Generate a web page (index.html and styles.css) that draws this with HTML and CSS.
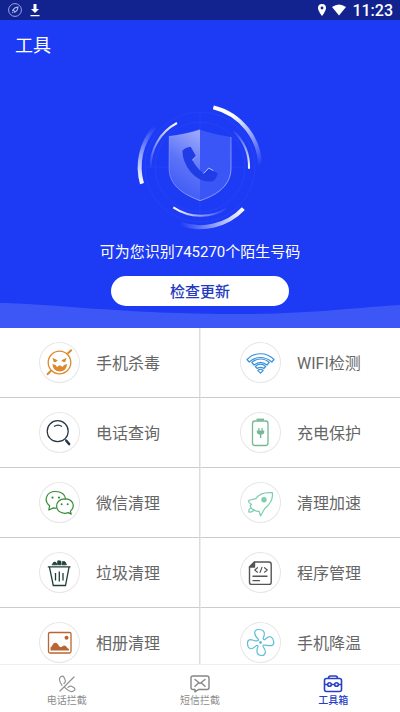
FILE: index.html
```html
<!DOCTYPE html>
<html lang="zh-CN">
<head>
<meta charset="utf-8">
<meta name="viewport" content="width=device-width, initial-scale=1">
<title>工具</title>
<link rel="stylesheet" href="styles.css">
</head>
<body>
<div class="status">
  <div class="status-group">
    <svg width="14" height="14" viewBox="0 0 14 14" fill="none" stroke="#aab4ee"><circle cx="7" cy="7" r="6.4" stroke-width=".9"/><path d="M4.7 7.3Q6.2 4.3 10 4 9.700 7.800 6.700 9.300L6.400 8 5.800 7.600ZM4.200 9.800l1-1" stroke-width="1.100"/></svg>
    <svg width="10" height="14" viewBox="0 0 10 14" fill="#fff"><path d="M3.500 1h3v5H9L5 10 1 6h2.500zM.5 12h9v1.200h-9z"/></svg>
  </div>
  <div class="status-group status-right">
    <svg width="8" height="12" viewBox="0 0 8 12" fill="#fff"><path fill-rule="evenodd" d="M4 0a4 4 0 0 1 4 4C8 7 4 12 4 12S0 7 0 4a4 4 0 0 1 4-4zm0 2.600a1.400 1.400 0 1 0 0 2.800 1.400 1.400 0 0 0 0-2.800z"/></svg>
    <svg width="14" height="12" viewBox="0 0 14 12" fill="#fff"><path d="M0 3Q7-2 14 3L7 11.500z"/></svg>
    <time class="clock">11:23</time>
  </div>
</div>
<header class="hero">
  <svg class="wave" viewBox="0 0 400 26" preserveAspectRatio="none"><path d="M0 1C60 2 120 12 240 12 310 12 350 6 400 3V26H0z" fill="#3d57f6"/></svg>
  <h1 class="title">工具</h1>
  <svg class="shield" viewBox="42 37 396 390" fill="none">
    <defs>
      <linearGradient id="a1" gradientUnits="userSpaceOnUse" x1="65" y1="282" x2="105" y2="110"><stop stop-color="#fff"/><stop offset="1" stop-color="#fff" stop-opacity="0"/></linearGradient>
      <linearGradient id="a2" gradientUnits="userSpaceOnUse" x1="300" y1="50" x2="420" y2="228"><stop offset=".2" stop-color="#fff"/><stop offset="1" stop-color="#fff" stop-opacity="0"/></linearGradient>
      <linearGradient id="a3" gradientUnits="userSpaceOnUse" x1="370" y1="357" x2="180" y2="405"><stop stop-color="#fff"/><stop offset="1" stop-color="#fff" stop-opacity="0"/></linearGradient>
      <linearGradient id="b1" gradientUnits="userSpaceOnUse" x1="170" y1="100" x2="92" y2="238"><stop stop-color="#fff"/><stop offset="1" stop-color="#fff" stop-opacity="0"/></linearGradient>
      <linearGradient id="b2" gradientUnits="userSpaceOnUse" x1="387" y1="237" x2="340" y2="120"><stop stop-color="#fff"/><stop offset="1" stop-color="#fff" stop-opacity="0"/></linearGradient>
      <linearGradient id="b3" gradientUnits="userSpaceOnUse" x1="160" y1="353" x2="325" y2="355"><stop stop-color="#fff"/><stop offset="1" stop-color="#fff" stop-opacity="0"/></linearGradient>
      <linearGradient id="s1" x1=".7" y1="0" x2=".4" y2="1"><stop stop-color="#98a5fa"/><stop offset=".5" stop-color="#5b72f8"/><stop offset="1" stop-color="#3c57f5"/></linearGradient>
      <linearGradient id="e" x1="0" y1="0" x2="1" y2="1"><stop stop-color="#fff" stop-opacity=".2"/><stop offset="1" stop-color="#fff" stop-opacity=".8"/></linearGradient>
    </defs>
    <g stroke="#4460ff" stroke-opacity=".3" stroke-width="2"><circle cx="240" cy="232" r="165"/><circle cx="240" cy="232" r="135"/><path d="M240 65v55M240 335v50M75 232h70M335 232h70"/></g>
    <path d="M66 282A180 180 0 0 1 105 112" stroke="url(#a1)" stroke-width="12"/>
    <path d="M280 53A183 183 0 0 1 420 232" stroke="url(#a2)" stroke-width="12"/>
    <path d="M370 357A179 179 0 0 1 180 402" stroke="url(#a3)" stroke-width="12"/>
    <path d="M171 100A148 148 0 0 0 92 238" stroke="url(#b1)" stroke-width="6"/>
    <path d="M387 237A148 148 0 0 0 340 124" stroke="url(#b2)" stroke-width="6"/>
    <path d="M160 353A148 148 0 0 0 322 355" stroke="url(#b3)" stroke-width="6"/>
    <path d="M240 120C210 130 180 136 147 140V235C147 285 185 312 240 333z" fill="url(#s1)"/>
    <path d="M240 120C270 130 300 136 333 142V235C333 285 295 315 240 333z" fill="#3b56f7"/>
    <path d="M240 120C210 130 180 136 147 140V235C147 285 185 312 240 333 295 315 333 285 333 235V142" stroke="url(#e)" stroke-width="2"/>
    <path d="M187 183Q196 172 212 171L228 200Q224 206 217 211 230 236 250 251 258 246 266 235L293 251Q290 267 279 275 240 280 212 247 187 215 187 183Z" fill="#1f3ce6"/>
    <path d="M228 200Q224 206 217 211M250 251Q258 246 266 235l14 8" stroke="#b4c0ff" stroke-width="3"/>
  </svg>
  <p class="caption">可为您识别745270个陌生号码</p>
  <button class="update" type="button">检查更新</button>
</header>
<main class="tools">
  <a class="tool" href="#"><span class="disc"><svg viewBox="0 0 41 41" fill="none" stroke="#dc8a30"><circle cx="20.500" cy="20.500" r="11.300" stroke-width="1.300"/><path d="M28.500 11.800l4.200-4M8 32.800l4.200-4.300" stroke-width="2"/><path d="M13.500 15.800l5 2.400c-.8 2.200-4.200 2.600-4.200.2zM27.500 15.800l-5 2.400c.8 2.200 4.200 2.600 4.200.2zM13.500 22l3 1 1.500 2 2-1.500h1.500l2 1.500 1.500-2 3-1c0 4.500-3 7.500-7.200 7.500S13.500 26.500 13.500 22z" fill="#dc8a30" stroke="none"/></svg></span><span class="label">手机杀毒</span></a>
  <a class="tool" href="#"><span class="disc"><svg viewBox="0 0 41 41" fill="none" stroke="#3b94d9" stroke-width="1.200" stroke-linejoin="round"><path d="M7 17.500C14.500 9.800 26.500 9.800 34 17.500L31.800 20C25 14 16 14 9.200 20z"/><path d="M11.800 20.500C16.500 15.800 24.500 15.800 29.200 20.500L27 23C23 19.700 18 19.700 14 23z"/><path d="M15.300 24.500C18.500 21.700 22.500 21.700 25.700 24.500L23.800 26.500C21.500 25 19.500 25 17.200 26.500z"/><path d="M17.700 28.400q2.800-2.200 5.600 0l-2.800 2.800z"/></svg></span><span class="label">WIFI检测</span></a>
  <a class="tool" href="#"><span class="disc"><svg viewBox="0 0 41 41" fill="none" stroke="#253746"><circle cx="18.700" cy="19.200" r="10.500" stroke-width="1.200"/><path d="M15 14.500q4-2.800 8 0" stroke-width="1.200"/><path d="M26.300 27.500l1.500 1.500" stroke-width="1.200"/><path d="M27.500 29l2.600 3" stroke-width="2.600" stroke-linecap="round"/></svg></span><span class="label">电话查询</span></a>
  <a class="tool" href="#"><span class="disc"><svg viewBox="0 0 41 41" fill="none" stroke="#76b896" stroke-width="1.300"><rect x="12.500" y="9" width="15.500" height="24.500" rx="2.500"/><path d="M16.500 7.600h7.500" stroke-width="2"/><path d="M16.800 18.500h1.500V16h1.200v2.500h2V16h1.200v2.500h1.600v1.300c0 2-1 2.600-3 2.900V26h-1.400v-3.300c-2-.3-3.100-.9-3.100-2.900z" fill="#76b896" stroke="none"/></svg></span><span class="label">充电保护</span></a>
  <a class="tool" href="#"><span class="disc"><svg viewBox="0 0 41 41" fill="none" stroke="#398b38" stroke-width="1.200" stroke-linejoin="round"><path d="M17.300 26.300q-1.500 0-2.900-.4L9.800 28l.8-4.200C4.500 19 6.800 9.500 16.500 9.500c5.600 0 9.700 3 10.100 7.200"/><path d="M26 16.800c-11 0-11.200 14.300-.4 14.500q2 0 3.800-.7l2.800 1.500-.8-3C36.500 24.800 34.500 16.900 26 16.800z"/><g fill="#398b38" stroke="none"><circle cx="13.500" cy="15.600" r="1.100"/><circle cx="20" cy="15.600" r="1.100"/><circle cx="22.600" cy="22.200" r="1"/><circle cx="28.600" cy="22.200" r="1"/></g></svg></span><span class="label">微信清理</span></a>
  <a class="tool" href="#"><span class="disc"><svg viewBox="0 0 41 41" fill="none" stroke="#7dceae" stroke-width="1.200" stroke-linejoin="round"><path d="M32.300 10.700C25 10 19 12 15.800 16.700L8.300 18.500c.2 2 2 3 3.200 4l-1.300 1.200q.2 2.800 3.800 4.400 3 1.500 5.200 1.200l1.300 4.700 4.300-7.500C29 23 33.500 17.500 32.300 10.700z"/><path d="M11.500 25.500c-2 .5-2.800 2-2.800 4.500 3 .2 5-.5 5.300-2.600"/><circle cx="24" cy="17.700" r="2.700" fill="#7dceae" stroke="none"/></svg></span><span class="label">清理加速</span></a>
  <a class="tool" href="#"><span class="disc"><svg viewBox="0 0 41 41" fill="none" stroke="#1f4038" stroke-width="1.300"><path d="M8.800 14.800H31.500M10.500 15.300L14.300 33.500h12.200L30 15.300"/><path d="M16.500 21v7.500M20.300 19.500v10M24 21v7.500"/><path d="M13 12.800l2-2.800 2 .5 1 2.300zM18.500 12.800l.3-4 3 .3.300 3.700zM23 12.800l.6-3.300 2.400.3 1.500 3z" fill="#1f4038" stroke-width=".8"/></svg></span><span class="label">垃圾清理</span></a>
  <a class="tool" href="#"><span class="disc"><svg viewBox="0 0 41 41" fill="none" stroke="#555" stroke-width="1.400" stroke-linejoin="round" stroke-linecap="round"><path d="M14.500 10h14.500q2.200 0 2.200 2.200v18q0 2.200-2.200 2.200H11.700q-2.200 0-2.200-2.200V15z"/><path d="M14.500 10v5h-5z" fill="#555"/><path d="M17.500 15.700l-2.800 2.300 2.800 2.200M24.500 15.700l2.800 2.300-2.800 2.200M22 15.300l-2 5.200" stroke-width="1.100"/><path d="M13 24.300h14M13 28.600h6.500"/></svg></span><span class="label">程序管理</span></a>
  <a class="tool" href="#"><span class="disc"><svg viewBox="0 0 41 41" fill="none" stroke="#b96632" stroke-width="1.300"><rect x="9.500" y="10.500" width="22.500" height="20.500" rx="1.500"/><circle cx="27.500" cy="15.800" r="2" fill="#b96632" stroke="none"/><path d="M11.500 28.500v-3c2-1.500 2.500-5 5-4.800 2.800.2 3.300 4.500 5.500 4.300 1.500-.3 2-1.800 3.500-1.500 1.700.3 2.500 2.800 4.500 3.500v1.500z" fill="#b96632" stroke="none"/></svg></span><span class="label">相册清理</span></a>
  <a class="tool" href="#"><span class="disc"><svg viewBox="0 0 41 41" fill="none" stroke="#5fbdd8" stroke-width="1.200"><path d="M18.500 17.500C14.500 14 12.500 7.500 18.500 7.500S25.500 11 23.200 16.500C23.500 17.600 24 18 24.500 17.800 27.500 16 28 13.500 31 15s4 8 .5 8.600S26.500 22.500 23.500 23.200C22.800 23.600 22.800 24.200 23.200 24.800 26 28 26.500 33.500 21.500 33.500S16.200 29 18 24.500C18 23.600 17.500 23.200 16.500 23.500 14 25 13 27.800 10 26.500S6.500 18.500 9.500 17.800 14 19.500 17.500 18.800C18.500 18.500 18.800 18 18.500 17.500z"/><circle cx="20.500" cy="20.500" r="1.400" fill="#5fbdd8" stroke="none"/></svg></span><span class="label">手机降温</span></a>
</main>
<nav class="tabs">
  <a class="tab" href="#"><svg viewBox="0 0 20 20" fill="none" stroke="#929292" stroke-width="1.200"><path d="M7 9.500C8.200 8.300 9 7.500 8.200 6L6.800 3C6.200 1.700 5 2 3.800 2.700 1.300 4.500 3 8.500 5 11.300M8 13.700C10.500 16.300 14 18.500 16.500 17 18.500 15.800 18.200 14.500 17 13.700L14.600 12.300C13.200 11.700 12.500 12.300 11 13.300M17 3L3 17" stroke-linecap="round"/></svg>电话拦截</a>
  <a class="tab" href="#"><svg viewBox="0 0 20 20" fill="none" stroke="#858585" stroke-width="1.400" stroke-linejoin="round" stroke-linecap="round"><path d="M3 2h14q2 0 2 2v9.500q0 2-2 2H8.500L5 17.800v-2.300H3q-2 0-2-2V4q0-2 2-2z"/><path d="M5 5.500l5 4 5-4M5 12.200l3.300-3M15 12.200l-3.300-3"/></svg>短信拦截</a>
  <a class="tab active" href="#" aria-current="page"><svg viewBox="0 0 20 20" fill="none" stroke="#2741c6" stroke-width="1.600"><rect x="1.500" y="4.500" width="17" height="13" rx="2"/><path d="M5.500 4.500q0-2.500 2-2.500h5q2 0 2 2.500M1.500 10.500H5M8.200 10.500h3.600M15 10.500h3.500"/><circle cx="6.500" cy="10.500" r="1.800"/><circle cx="13.500" cy="10.500" r="1.800"/></svg>工具箱</a>
</nav>
</body>
</html>
```
FILE: styles.css
```css
* {
  box-sizing: border-box;
}

body {
  margin: 0;
  height: 100vh;
  display: flex;
  flex-direction: column;
  background: #fff;
  font-family: Roboto, "Noto Sans CJK SC", sans-serif;
}

svg {
  display: block;
}

a {
  color: inherit;
  text-decoration: none;
}

.status {
  flex: none;
  display: flex;
  justify-content: space-between;
  align-items: center;
  height: 20px;
  padding: 0 7px 0 8px;
  background: #12228f;
  color: #fff;
}

.status-group {
  display: flex;
  align-items: center;
  gap: 8px;
}

.status-right {
  gap: 6px;
}

.clock {
  padding-top: 2px;
  font-size: 16px;
  line-height: 20px;
  font-weight: 500;
}

.hero {
  flex: none;
  position: relative;
  display: flex;
  flex-direction: column;
  align-items: center;
  padding: 13px 15px 22px;
  background: #1d3bf5;
  color: #fff;
}

.wave {
  position: absolute;
  left: 0;
  bottom: 0;
  width: 100%;
  height: 26px;
}

.title {
  align-self: flex-start;
  margin: 0 0 43px;
  font-size: 18px;
  line-height: 26px;
  font-weight: 400;
}

.shield {
  width: 132px;
  height: 130px;
}

.caption {
  margin: 8px 0 12px;
  font-size: 15px;
  line-height: 24px;
}

.update {
  position: relative;
  width: 178px;
  height: 30px;
  padding: 0 0 2px;
  border: 0;
  border-radius: 15px;
  background: #fff;
  color: #2339c0;
  font: inherit;
  font-size: 15px;
  font-weight: 500;
}

.tools {
  flex: 1;
  min-height: 0;
  overflow: hidden;
  display: grid;
  grid-template-columns: 1fr 1fr;
  grid-auto-rows: 70px;
}

.tool {
  display: flex;
  align-items: center;
  gap: 16px;
  padding-left: 39px;
  border-bottom: 1px solid #ccc;
  color: #666;
  font-size: 16px;
}

.tool:nth-child(odd) {
  border-right: 1px solid #ddd;
}

.tool:nth-child(even) {
  border-left: 1px solid #eee;
}

.disc {
  width: 41px;
  height: 41px;
  border-radius: 50%;
  box-shadow: inset 0 0 0 1px #e6e6e6;
}

.label {
  padding-bottom: 2px;
}

.tabs {
  flex: none;
  display: grid;
  grid-template-columns: repeat(3, 1fr);
  height: 48px;
  border-top: 1px solid #eee;
  background: #fff;
}

.tab {
  display: flex;
  flex-direction: column;
  align-items: center;
  padding-top: 9px;
  color: #8c8c8c;
  font-size: 10px;
  line-height: 14px;
}

.tab svg {
  width: 20px;
  height: 20px;
}

.active {
  color: #2741c6;
  font-weight: 500;
}
```
